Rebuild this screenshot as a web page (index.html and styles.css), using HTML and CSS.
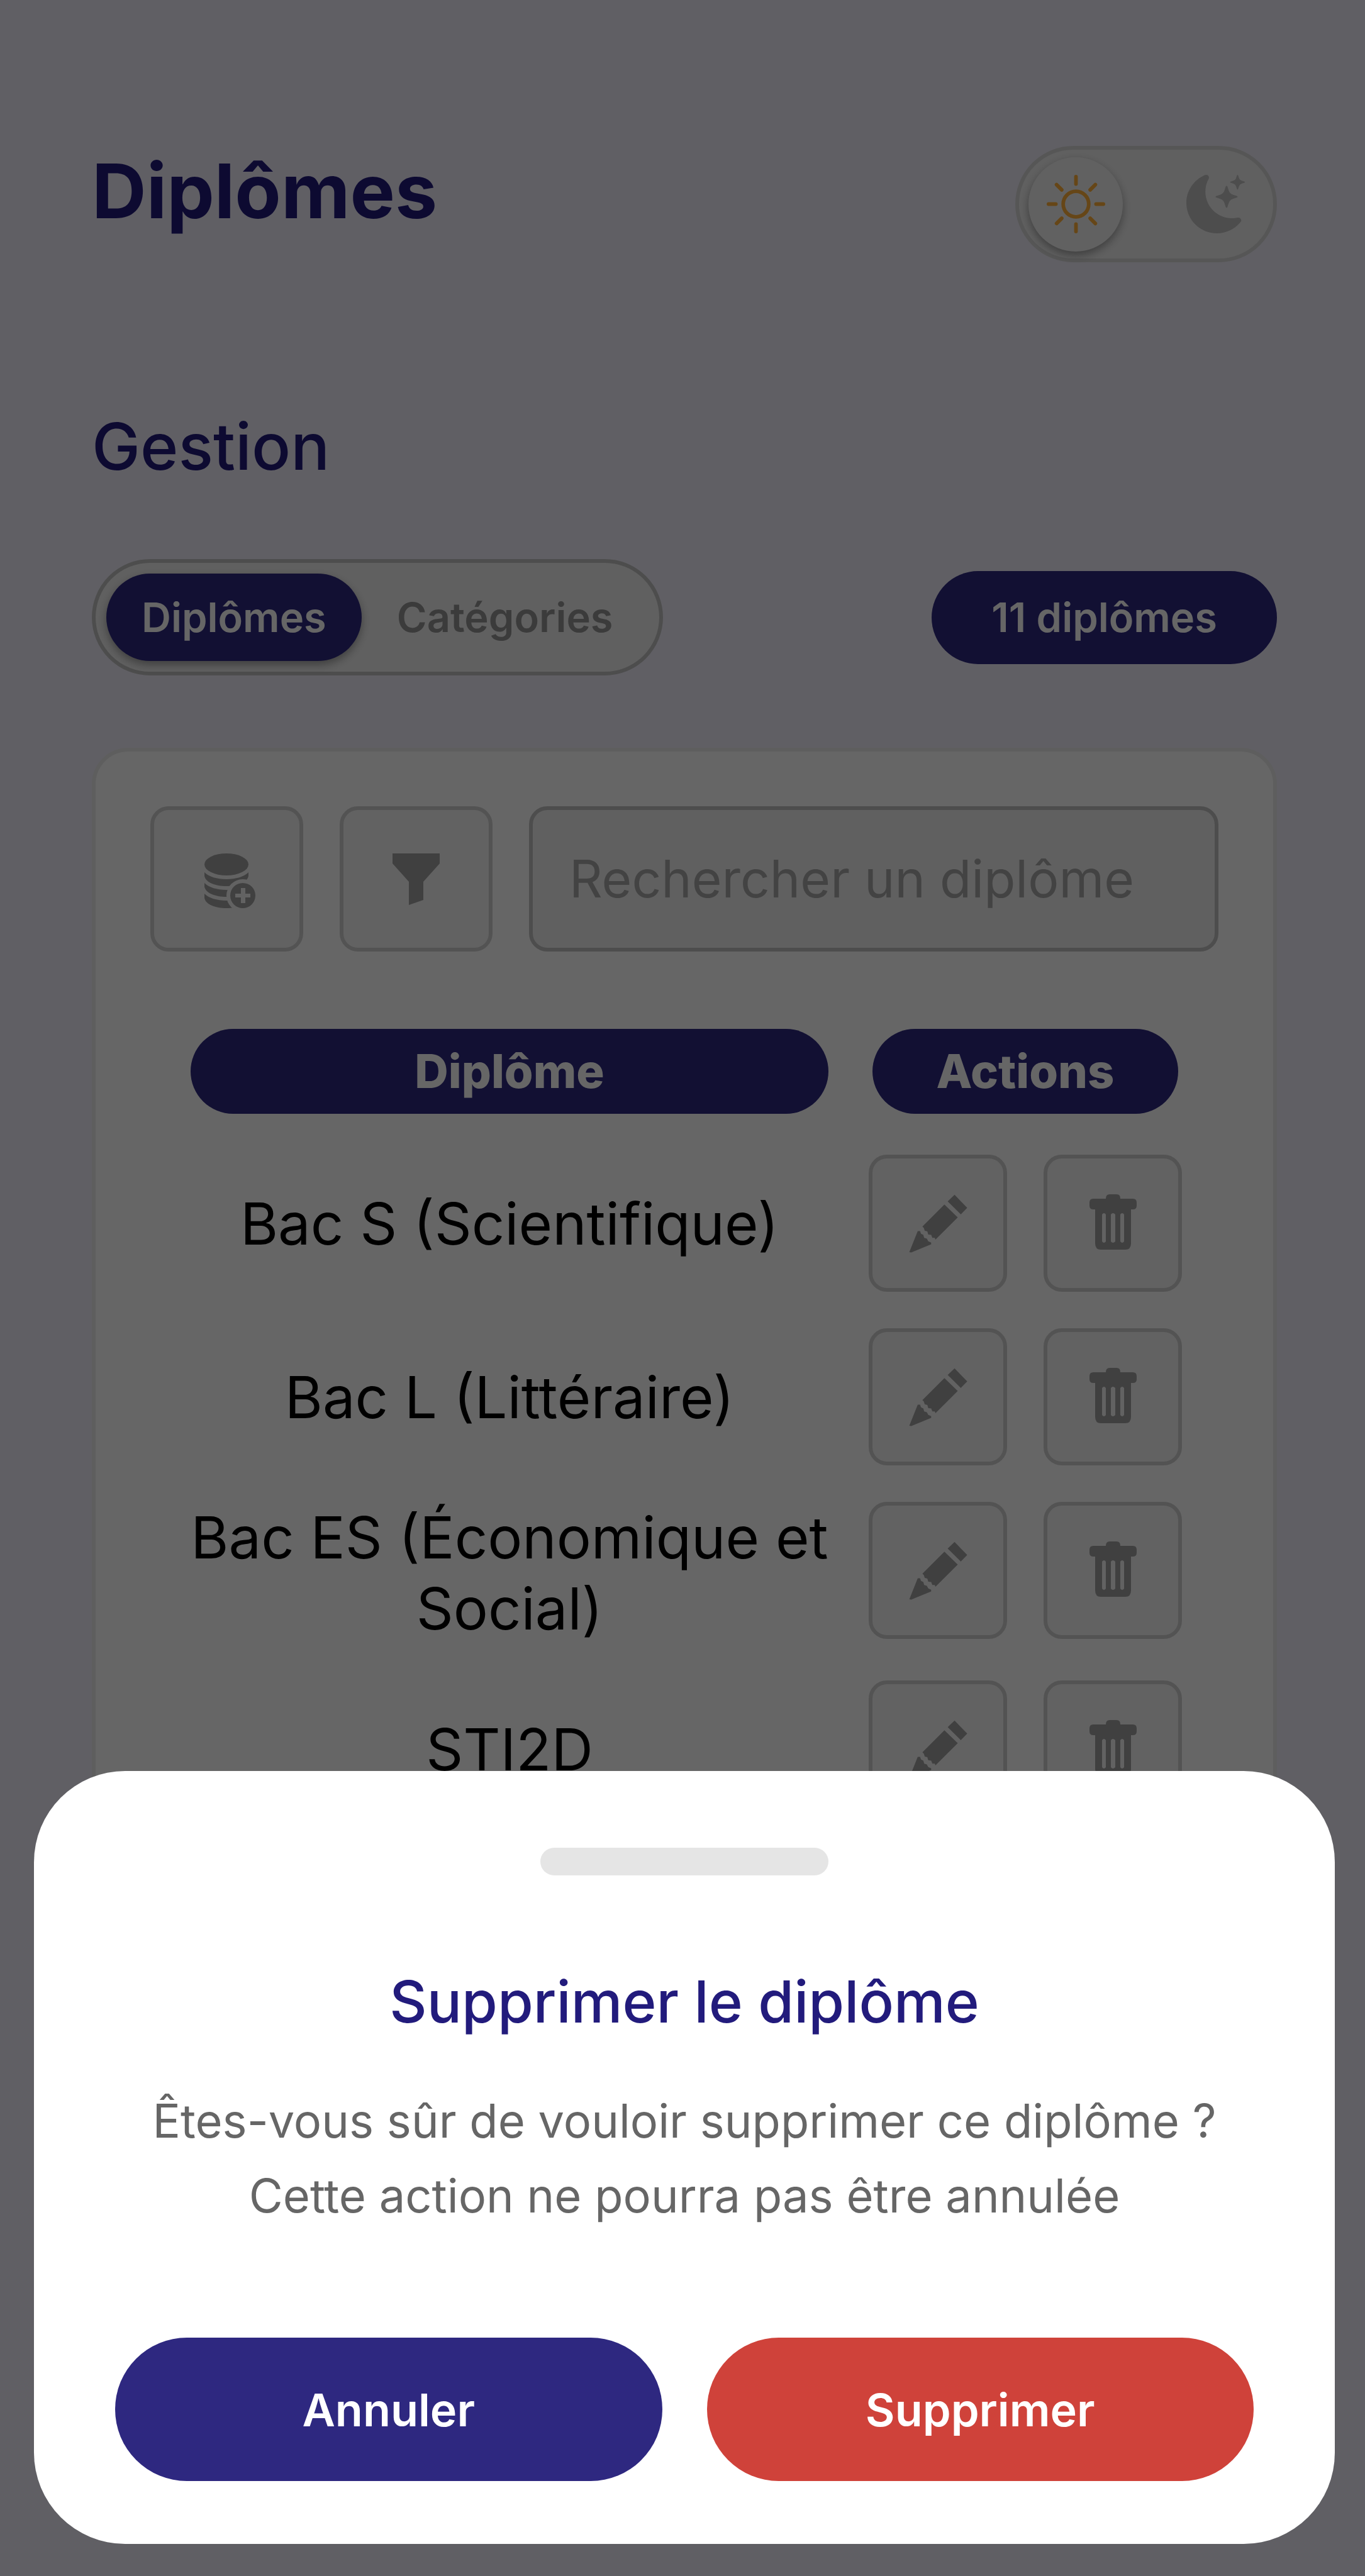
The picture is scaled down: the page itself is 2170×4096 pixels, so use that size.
FILE: index.html
```html
<!DOCTYPE html>
<html lang="fr">
<head>
  <meta charset="utf-8">
  <meta name="viewport" content="width=device-width, initial-scale=1">
  <title>Diplômes</title>
  <link rel="stylesheet" href="styles.css">
</head>
<body>
  <!-- Shared icon symbols -->
  <svg class="sprite" aria-hidden="true">
    <symbol id="icon-pencil" viewBox="465 618 500 500">
      <path d="M855 622 963 733 908 790 796 678Z"/>
      <path d="M768 705 882 815 692 1005 685 990 665 990 655 965 630 962 622 935 600 930 592 905 580 893Z"/>
      <path d="M540 932 560 932 568 955 588 965 595 990 618 997 630 1020 655 1030 655 1045 485 1115 468 1113Z"/>
    </symbol>
    <symbol id="icon-trash" viewBox="0 0 93 93">
      <path fill-rule="evenodd" d="M35 7q0-7 6-7h11q6 0 6 7h20q6 0 6 6v5q0 6-6 6h-3v54q0 10-9 10H27q-9 0-9-10V24h-3q-6 0-6-6v-5q0-6 6-6ZM29 32v43q3 4 6 0V32q-3-4-6 0ZM43 32v43q3 4 7 0V32q-4-4-7 0ZM58 32v43q3 4 6 0V32q-3-4-6 0Z"/>
    </symbol>
  </svg>

  <main class="page">
    <header class="page-header">
      <h1 class="page-title">Diplômes</h1>
      <button class="theme-toggle" type="button" aria-label="Changer de thème">
        <span class="theme-option theme-option-active">
          <svg class="icon" viewBox="0 0 16 16" aria-hidden="true"><path d="M8 11a3 3 0 1 1 0-6 3 3 0 0 1 0 6m0 1a4 4 0 1 0 0-8 4 4 0 0 0 0 8M8 0a.5.5 0 0 1 .5.5v2a.5.5 0 0 1-1 0v-2A.5.5 0 0 1 8 0m0 13a.5.5 0 0 1 .5.5v2a.5.5 0 0 1-1 0v-2A.5.5 0 0 1 8 13m8-5a.5.5 0 0 1-.5.5h-2a.5.5 0 0 1 0-1h2a.5.5 0 0 1 .5.5M3 8a.5.5 0 0 1-.5.5h-2a.5.5 0 0 1 0-1h2A.5.5 0 0 1 3 8m10.657-5.657a.5.5 0 0 1 0 .707l-1.414 1.415a.5.5 0 1 1-.707-.708l1.414-1.414a.5.5 0 0 1 .707 0m-9.193 9.193a.5.5 0 0 1 0 .707L3.05 13.657a.5.5 0 0 1-.707-.707l1.414-1.414a.5.5 0 0 1 .707 0m9.193 2.121a.5.5 0 0 1-.707 0l-1.414-1.414a.5.5 0 0 1 .707-.707l1.414 1.414a.5.5 0 0 1 0 .707M4.464 4.465a.5.5 0 0 1-.707 0L2.343 3.05a.5.5 0 1 1 .707-.707l1.414 1.414a.5.5 0 0 1 0 .708"/></svg>
        </span>
        <span class="theme-option">
          <svg class="icon" viewBox="0 0 16 16" aria-hidden="true"><path d="M6 .278a.77.77 0 0 1 .08.858 7.2 7.2 0 0 0-.878 3.46c0 4.021 3.278 7.277 7.318 7.277q.792-.001 1.533-.16a.79.79 0 0 1 .81.316.73.73 0 0 1-.031.893A8.35 8.35 0 0 1 8.344 16C3.734 16 0 12.286 0 7.71 0 4.266 2.114 1.312 5.124.06A.75.75 0 0 1 6 .278"/><path d="M10.794 3.148a.217.217 0 0 1 .412 0l.387 1.162c.173.518.579.924 1.097 1.097l1.162.387a.217.217 0 0 1 0 .412l-1.162.387a1.73 1.73 0 0 0-1.097 1.097l-.387 1.162a.217.217 0 0 1-.412 0l-.387-1.162A1.73 1.73 0 0 0 9.31 6.593l-1.162-.387a.217.217 0 0 1 0-.412l1.162-.387a1.73 1.73 0 0 0 1.097-1.097zM13.863.099a.145.145 0 0 1 .274 0l.258.774c.115.346.386.617.732.732l.774.258a.145.145 0 0 1 0 .274l-.774.258a1.16 1.16 0 0 0-.732.732l-.258.774a.145.145 0 0 1-.274 0l-.258-.774a1.16 1.16 0 0 0-.732-.732l-.774-.258a.145.145 0 0 1 0-.274l.774-.258c.346-.115.617-.386.732-.732z"/></svg>
        </span>
      </button>
    </header>

    <h2 class="section-title">Gestion</h2>

    <div class="section-bar">
      <div class="segmented">
        <button class="segment segment-active" type="button" aria-pressed="true">Diplômes</button>
        <button class="segment" type="button" aria-pressed="false">Catégories</button>
      </div>
      <span class="count-badge">11 diplômes</span>
    </div>

    <section class="card">
      <div class="toolbar">
        <button class="icon-button tool-button" type="button" aria-label="Ajouter">
          <svg class="icon" viewBox="0 0 93 93" aria-hidden="true">
            <mask id="badge-gap">
              <rect width="93" height="93" fill="#fff"/>
              <circle cx="72" cy="73" r="26" fill="#000"/>
            </mask>
            <ellipse cx="46" cy="23.500" rx="35" ry="17.500"/>
            <g mask="url(#badge-gap)">
              <path d="M11 36C18 43 31 47 46 47S74 43 81 36V42C79 52 64 58 46 58S13 52 11 42Z"/>
              <path d="M11 53C18 60 31 64 46 64S74 60 81 53V59C79 69 64 75 46 75S13 69 11 59Z"/>
              <path d="M11 70C18 77 31 81 46 81S74 77 81 70V77C79 87 64 93 46 93S13 87 11 77Z"/>
            </g>
            <path fill-rule="evenodd" d="M72 53a20 20 0 1 0 0 40 20 20 0 1 0 0-40ZM69 61v9h-9v6h9v9h7v-9h8v-6h-8v-9Z"/>
          </svg>
        </button>
        <button class="icon-button tool-button" type="button" aria-label="Filtrer">
          <svg class="icon" viewBox="0 0 93 93" aria-hidden="true"><path d="M9 6H84V22L58 51V80L35 88V51L9 22Z"/></svg>
        </button>
        <input class="search" type="search" placeholder="Rechercher un diplôme" aria-label="Rechercher un diplôme">
      </div>

      <table class="list">
        <thead>
          <tr>
            <th scope="col"><span class="column-label">Diplôme</span></th>
            <th scope="col" class="actions-column"><span class="column-label">Actions</span></th>
          </tr>
        </thead>
        <tbody>
          <tr>
            <td>Bac S (Scientifique)</td>
            <td class="actions-cell">
              <div class="actions">
                <button class="icon-button" type="button" aria-label="Modifier"><svg class="icon"><use href="#icon-pencil"/></svg></button>
                <button class="icon-button" type="button" aria-label="Supprimer"><svg class="icon"><use href="#icon-trash"/></svg></button>
              </div>
            </td>
          </tr>
          <tr>
            <td>Bac L (Littéraire)</td>
            <td class="actions-cell">
              <div class="actions">
                <button class="icon-button" type="button" aria-label="Modifier"><svg class="icon"><use href="#icon-pencil"/></svg></button>
                <button class="icon-button" type="button" aria-label="Supprimer"><svg class="icon"><use href="#icon-trash"/></svg></button>
              </div>
            </td>
          </tr>
          <tr>
            <td>Bac ES (Économique et Social)</td>
            <td class="actions-cell">
              <div class="actions">
                <button class="icon-button" type="button" aria-label="Modifier"><svg class="icon"><use href="#icon-pencil"/></svg></button>
                <button class="icon-button" type="button" aria-label="Supprimer"><svg class="icon"><use href="#icon-trash"/></svg></button>
              </div>
            </td>
          </tr>
          <tr>
            <td>STI2D</td>
            <td class="actions-cell">
              <div class="actions">
                <button class="icon-button" type="button" aria-label="Modifier"><svg class="icon"><use href="#icon-pencil"/></svg></button>
                <button class="icon-button" type="button" aria-label="Supprimer"><svg class="icon"><use href="#icon-trash"/></svg></button>
              </div>
            </td>
          </tr>
        </tbody>
      </table>
    </section>
  </main>

  <div class="overlay">
    <div class="sheet" role="dialog" aria-modal="true" aria-labelledby="sheet-title">
      <div class="sheet-handle"></div>
      <h2 class="sheet-title" id="sheet-title">Supprimer le diplôme</h2>
      <p class="sheet-text">Êtes-vous sûr de vouloir supprimer ce diplôme ?<br>Cette action ne pourra pas être annulée</p>
      <div class="sheet-actions">
        <button class="sheet-button" type="button">Annuler</button>
        <button class="sheet-button sheet-button-danger" type="button">Supprimer</button>
      </div>
    </div>
  </div>
</body>
</html>
```
FILE: styles.css
```css
:root {
  --navy: #2e2880;
  --navy-text: #221b7c;
  --danger: #cf423a;
  --border: #d0d0d0;
  --border-strong: #c0c0c0;
  --field: #f0f0f0;
}

* {
  box-sizing: border-box;
}

body {
  margin: 0;
  min-height: 100vh;
  background: #f0eefa;
  color: #000;
  font-family: Inter, "Liberation Sans", sans-serif;
}

button,
input {
  margin: 0;
  font-family: inherit;
}

.sprite {
  position: absolute;
  width: 0;
  height: 0;
}

.icon {
  display: block;
  width: 93px;
  height: 93px;
  fill: currentColor;
}

/* Page */

.page {
  padding: 232px 140px 145px 146px;
}

.page-header {
  display: flex;
  align-items: flex-start;
  justify-content: space-between;
}

.page-title {
  margin: 0;
  color: var(--navy-text);
  font-size: 120px;
  font-weight: 650;
  line-height: 144px;
}

.theme-toggle {
  display: flex;
  align-items: center;
  justify-content: space-between;
  width: 416px;
  height: 185px;
  padding: 0 17px 0 15px;
  border: 6px solid #d8d8d8;
  border-radius: 93px;
  background: var(--field);
  color: #c0c0c0;
}

.theme-option {
  display: grid;
  place-items: center;
  width: 150px;
  height: 150px;
  border-radius: 50%;
}

.theme-option-active {
  background: #f2f2f2;
  box-shadow: 0 6px 14px rgba(0, 0, 0, 0.35);
  color: #ffb03a;
}

.section-title {
  margin: 229px 0 115px;
  color: var(--navy-text);
  font-size: 103px;
  font-weight: 500;
  line-height: 128px;
}

.section-bar {
  display: flex;
  align-items: center;
  justify-content: space-between;
}

.segmented {
  display: flex;
  padding: 17px;
  border: 6px solid var(--border-strong);
  border-radius: 93px;
  background: var(--field);
}

.segment {
  height: 139px;
  padding: 0 56px;
  border: 0;
  border-radius: 70px;
  background: none;
  color: #939393;
  font-size: 65px;
  font-weight: 600;
}

.segment-active {
  background: var(--navy);
  box-shadow: 0 6px 14px rgba(0, 0, 0, 0.35);
  color: #fff;
}

.count-badge {
  padding: 0 95px;
  border-radius: 74px;
  background: var(--navy);
  color: #fff;
  font-size: 65px;
  font-weight: 600;
  line-height: 148px;
}

/* Card */

.card {
  margin-top: 115px;
  padding: 87px;
  border: 6px solid #ebebeb;
  border-radius: 58px;
  background: #fff;
}

.toolbar {
  display: flex;
  gap: 58px;
}

.icon-button {
  display: grid;
  flex: none;
  place-items: center;
  width: 220px;
  height: 218px;
  padding: 0;
  border: 6px solid var(--border);
  border-radius: 29px;
  background: #f6f6f6;
  color: #a0a0a0;
}

.tool-button {
  width: 243px;
  height: 231px;
}

.search {
  flex: 1;
  min-width: 0;
  height: 231px;
  padding: 0 58px;
  border: 6px solid var(--border-strong);
  border-radius: 29px;
  background: var(--field);
  font-size: 82px;
  appearance: none;
}

.search::placeholder {
  color: #a8a8a8;
  opacity: 1;
}

.list {
  width: calc(100% - 58px);
  margin: 123px 29px 0;
  border-collapse: collapse;
}

.list th {
  padding: 0 35px 36px;
}

.list .actions-column {
  width: 556px;
}

.column-label {
  display: block;
  border-radius: 68px;
  background: var(--navy);
  color: #fff;
  font-size: 74px;
  font-weight: 800;
  line-height: 135px;
}

.list td {
  padding: 29px;
  font-size: 92px;
  line-height: 113px;
  text-align: center;
  vertical-align: middle;
}

.list .actions-cell {
  vertical-align: top;
}

.actions {
  display: flex;
  justify-content: center;
  gap: 58px;
}

/* Confirmation sheet */

.overlay {
  position: fixed;
  inset: 0;
  display: flex;
  align-items: flex-end;
  padding: 0 48px 51px 54px;
  background: rgba(0, 0, 0, 0.6);
}

.sheet {
  flex: 1;
  padding: 122px 129px 100px;
  border-radius: 145px;
  background: #fff;
  text-align: center;
}

.sheet-handle {
  width: 458px;
  height: 44px;
  margin: 0 auto 145px;
  border-radius: 22px;
  background: #e5e5e5;
}

.sheet-title {
  margin: 0 0 74px;
  color: var(--navy-text);
  font-size: 92px;
  font-weight: 500;
  line-height: 112px;
}

.sheet-text {
  margin: 0 0 166px;
  color: #666;
  font-size: 74px;
  line-height: 119px;
}

.sheet-actions {
  display: flex;
  gap: 71px;
}

.sheet-button {
  flex: 1;
  height: 228px;
  border: 0;
  border-radius: 114px;
  background: var(--navy);
  color: #fff;
  font-size: 72px;
  font-weight: 600;
}

.sheet-button-danger {
  background: var(--danger);
}
```
